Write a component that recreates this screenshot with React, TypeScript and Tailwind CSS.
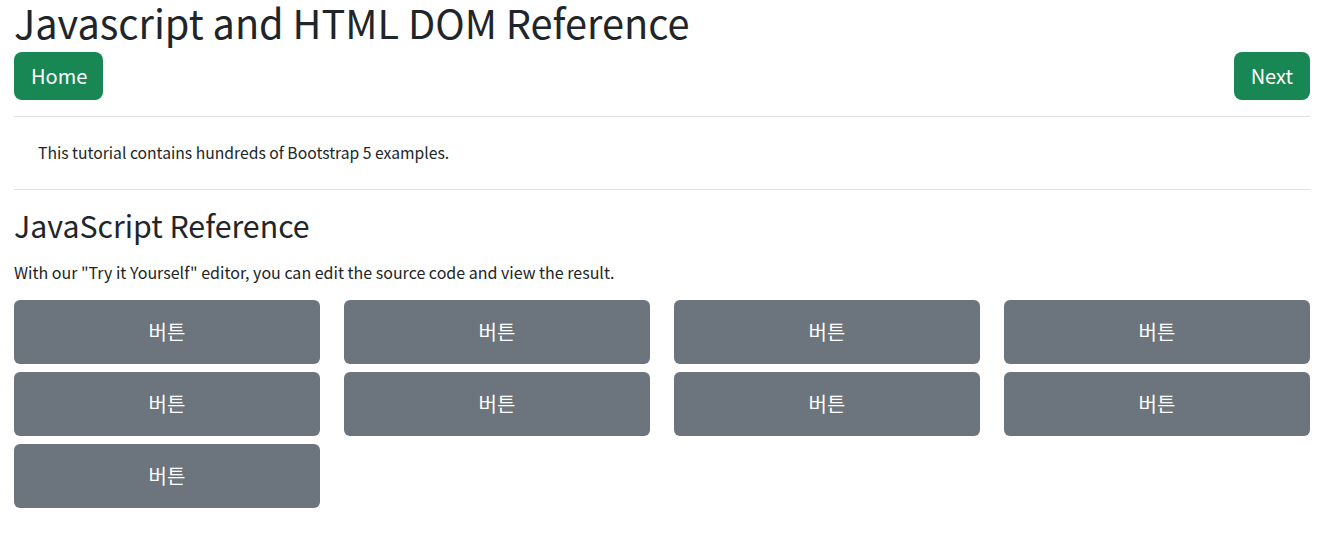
import React from "react";

const font = { fontFamily: '"Noto Sans CJK KR", "Noto Sans", sans-serif' };

export default function App() {
  const buttons = Array.from({ length: 9 }, (_, i) => i);

  return (
    <div className="px-[14px] pr-[22px] text-[#212529] bg-white" style={font}>
      <h1 className="text-[39.7px] leading-[44px] font-normal m-0">
        Javascript and HTML DOM Reference
      </h1>
      <div className="flex justify-between mt-[8px]">
        <button className="bg-[#198754] text-white text-[20px] leading-[32px] pl-[17px] pr-4 py-2 rounded-lg">
          Home
        </button>
        <button className="bg-[#198754] text-white text-[20px] leading-[32px] px-[17px] py-2 rounded-lg">
          Next
        </button>
      </div>
      <hr className="mt-4 border-t border-[#dee2e6]" />
      <div className="px-6 py-6">
        <p className="text-[15.7px] leading-[24px]">
          This tutorial contains hundreds of Bootstrap 5 examples.
        </p>
      </div>
      <hr className="border-t border-[#dee2e6]" />
      <h2 className="text-[30.3px] leading-[38px] mt-[16px] font-normal">
        JavaScript Reference
      </h2>
      <p className="text-[16px] leading-[24px] mt-[16px]">
        With our "Try it Yourself" editor, you can edit the source code and view the result.
      </p>
      <div className="grid grid-cols-4 gap-x-6 gap-y-2 mt-[16px]">
        {buttons.map((i) => (
          <button
            key={i}
            className="bg-[#6c757d] text-white text-[20px] h-16 rounded-md"
          >
            버튼
          </button>
        ))}
      </div>
    </div>
  );
}
